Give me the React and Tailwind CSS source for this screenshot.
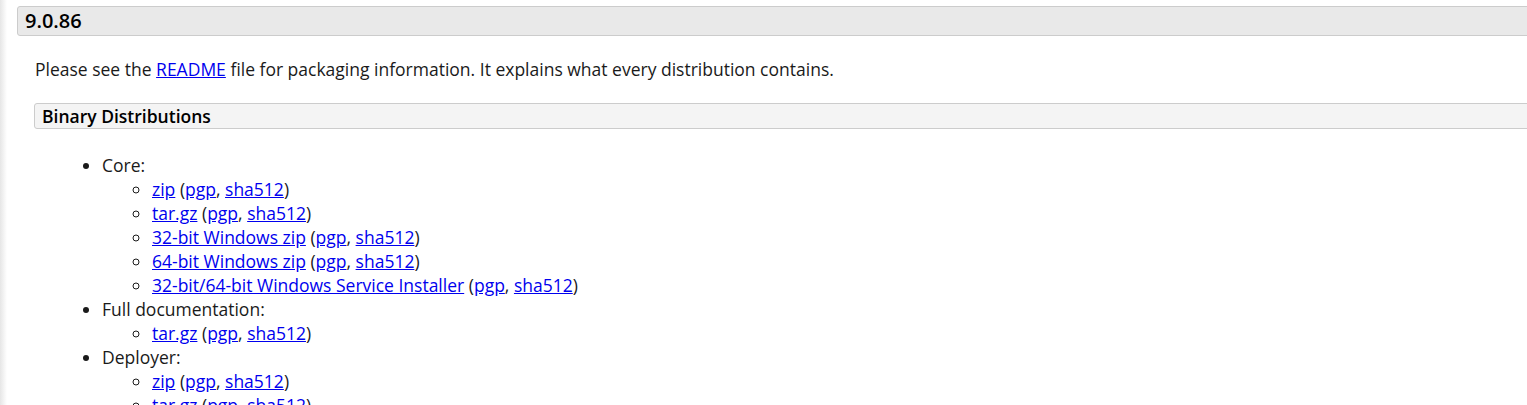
import React from 'react';

const font = { fontFamily: '"Open Sans", "Liberation Sans", sans-serif' };

const L = ({ children }) => (
  <a href="#" className="text-[#0000ee] underline">{children}</a>
);

const Sigs = () => (
  <>
    {' '}(<L>pgp</L>, <L>sha512</L>)
  </>
);

const Sub = ({ items }) => (
  <ul className="list-[circle] pl-[50px]">
    {items.map((name, i) => (
      <li key={i} className="leading-6">
        <L>{name}</L>
        <Sigs />
      </li>
    ))}
  </ul>
);

const App = () => {
  return (
    <div className="w-[1527px] h-[405px] overflow-hidden bg-white flex text-[#1a1a1a]" style={font}>
      <div className="w-[7px] shrink-0 bg-gradient-to-r from-[#e6e6e6] to-white" />
      <div className="flex-1 pl-[10px] pt-[6px] min-w-0">
        <div className="mr-[-20px] h-[30px] flex items-center pl-[7px] bg-[#e9e9e9] border border-[#cccccc] rounded-[3px]">
          <h3 className="text-[20px] font-semibold text-black">9.0.86</h3>
        </div>
        <div className="pl-[18px] pr-0">
          <p className="mt-[21px] text-[17.5px] leading-6">
            Please see the <L>README</L> file for packaging information. It explains what every distribution contains.
          </p>
          <div className="mt-[22px] ml-[-1px] mr-[-20px] h-[26px] flex items-center pl-[7px] bg-[#f4f4f4] border border-[#cccccc] rounded-[3px]">
            <h4 className="text-[17.5px] font-semibold text-black">Binary Distributions</h4>
          </div>
          <ul className="list-disc pl-[67px] mt-[24px] text-[17.5px]">
            <li className="leading-6">
              Core:
              <Sub items={['zip', 'tar.gz', '32-bit Windows zip', '64-bit Windows zip', '32-bit/64-bit Windows Service Installer']} />
            </li>
            <li className="leading-6">
              Full documentation:
              <Sub items={['tar.gz']} />
            </li>
            <li className="leading-6">
              Deployer:
              <Sub items={['zip', 'tar.gz']} />
            </li>
          </ul>
        </div>
      </div>
    </div>
  );
};

export default App;
